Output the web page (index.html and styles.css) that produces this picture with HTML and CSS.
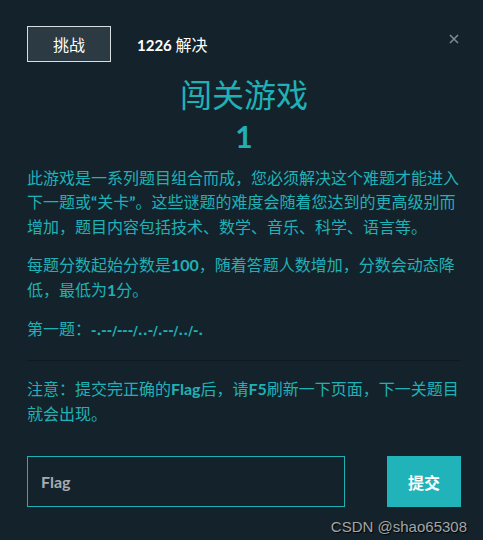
FILE: index.html
```html
<!DOCTYPE html>
<html lang="zh-CN">
<head>
  <meta charset="UTF-8">
  <meta name="viewport" content="width=device-width, initial-scale=1.0">
  <title>闯关游戏</title>
  <link rel="stylesheet" href="styles.css">
</head>
<body>
  <div class="modal">
    <div class="header">
      <button class="tab">挑战</button>
      <span class="solves"><b>1226</b> 解决</span>
      <button class="close" aria-label="关闭">
        <svg width="10" height="10" viewBox="0 0 10 10">
          <path d="M1 1 L9 9 M9 1 L1 9" stroke="#7d8a92" stroke-width="1.6" fill="none"/>
        </svg>
      </button>
    </div>

    <h1 class="title">闯关游戏</h1>
    <div class="value">1</div>

    <!-- 题目描述 -->
    <div class="desc">
      <p>此游戏是一系列题目组合而成，您必须解决这个难题才能进入下一题或<span class="quote">“</span>关卡<span class="quote">”</span>。这些谜题的难度会随着您达到的更高级别而增加，题目内容包括技术、数学、音乐、科学、语言等。</p>
      <p>每题分数起始分数是<b>100</b>，随着答题人数增加，分数会动态降低，最低为<b>1</b>分。</p>
      <p>第一题：<b class="morse">-.--/---/..-/.--/../-.</b></p>
      <hr class="divider">
      <p>注意：提交完正确的<b>Flag</b>后，请<b>F5</b>刷新一下页面，下一关题目就会出现。</p>
    </div>

    <form class="submit-row" onsubmit="return false">
      <input class="flag-input" type="text" placeholder="Flag">
      <button class="submit-btn" type="submit">提交</button>
    </form>

    <div class="watermark">CSDN @shao65308</div>
  </div>
</body>
</html>
```

FILE: styles.css
```css
body {
  margin: 0;
  padding: 0;
  background-color: #14232b;
  font-family: "Noto Sans CJK SC", sans-serif;
  color: #20b1b7;
}

b {
  font-family: Lato, "Noto Sans CJK SC", sans-serif;
  font-weight: 700;
}

.modal {
  padding: 26px 22px 0 27px;
}

.header {
  display: flex;
  align-items: center;
  height: 36px;
}

.tab {
  width: 84px;
  height: 36px;
  background-color: #2b3a43;
  border: 1px solid #d8dde0;
  color: #fff;
  font-family: "Noto Sans CJK SC", sans-serif;
  font-size: 16px;
  padding: 0;
}

.solves {
  margin-left: 26px;
  color: #fff;
  font-size: 16px;
}

.solves b {
  font-size: 15px;
}

.close {
  margin-left: auto;
  margin-right: 2px;
  align-self: flex-start;
  margin-top: 8px;
  background: none;
  border: none;
  padding: 0;
  line-height: 0;
}

.title {
  margin: 12px 0 0;
  text-align: center;
  font-size: 32px;
  font-weight: 400;
  line-height: 38px;
  color: #20b1b7;
}

.value {
  margin-top: 6px;
  text-align: center;
  font-family: Lato, sans-serif;
  font-weight: 700;
  font-size: 30px;
  line-height: 36px;
  color: #20b1b7;
}

.desc {
  margin-top: 11px;
}

.desc p {
  margin: 0 0 14px;
  font-size: 16px;
  line-height: 24px;
}

.quote {
  font-family: Lato, sans-serif;
  font-weight: 700;
}

.morse {
  font-family: "DejaVu Sans", sans-serif;
  font-size: 13px;
}

.divider {
  border: none;
  border-top: 1px solid #0e1a20;
  margin: 17px 0 15px;
}

.submit-row {
  display: flex;
  justify-content: space-between;
  margin-top: 31px;
}

.flag-input {
  box-sizing: border-box;
  width: 318px;
  height: 51px;
  background-color: #14232b;
  border: 1px solid #20b1b7;
  padding: 0 13px;
  font-family: Lato, sans-serif;
  font-weight: 700;
  font-size: 16px;
  color: #fff;
  outline: none;
}

.flag-input::placeholder {
  color: #a4abb3;
}

.submit-btn {
  width: 74px;
  height: 51px;
  background-color: #20b3b9;
  border: none;
  color: #fff;
  font-family: "Noto Sans CJK SC", sans-serif;
  font-weight: 700;
  font-size: 16px;
}

.watermark {
  margin-top: 10px;
  text-align: right;
  margin-right: -6px;
  font-family: "Liberation Sans", Arial, sans-serif;
  font-size: 15px;
  line-height: 20px;
  color: #a3a6a8;
  text-shadow: 1px 1px 1px #000;
}
```
